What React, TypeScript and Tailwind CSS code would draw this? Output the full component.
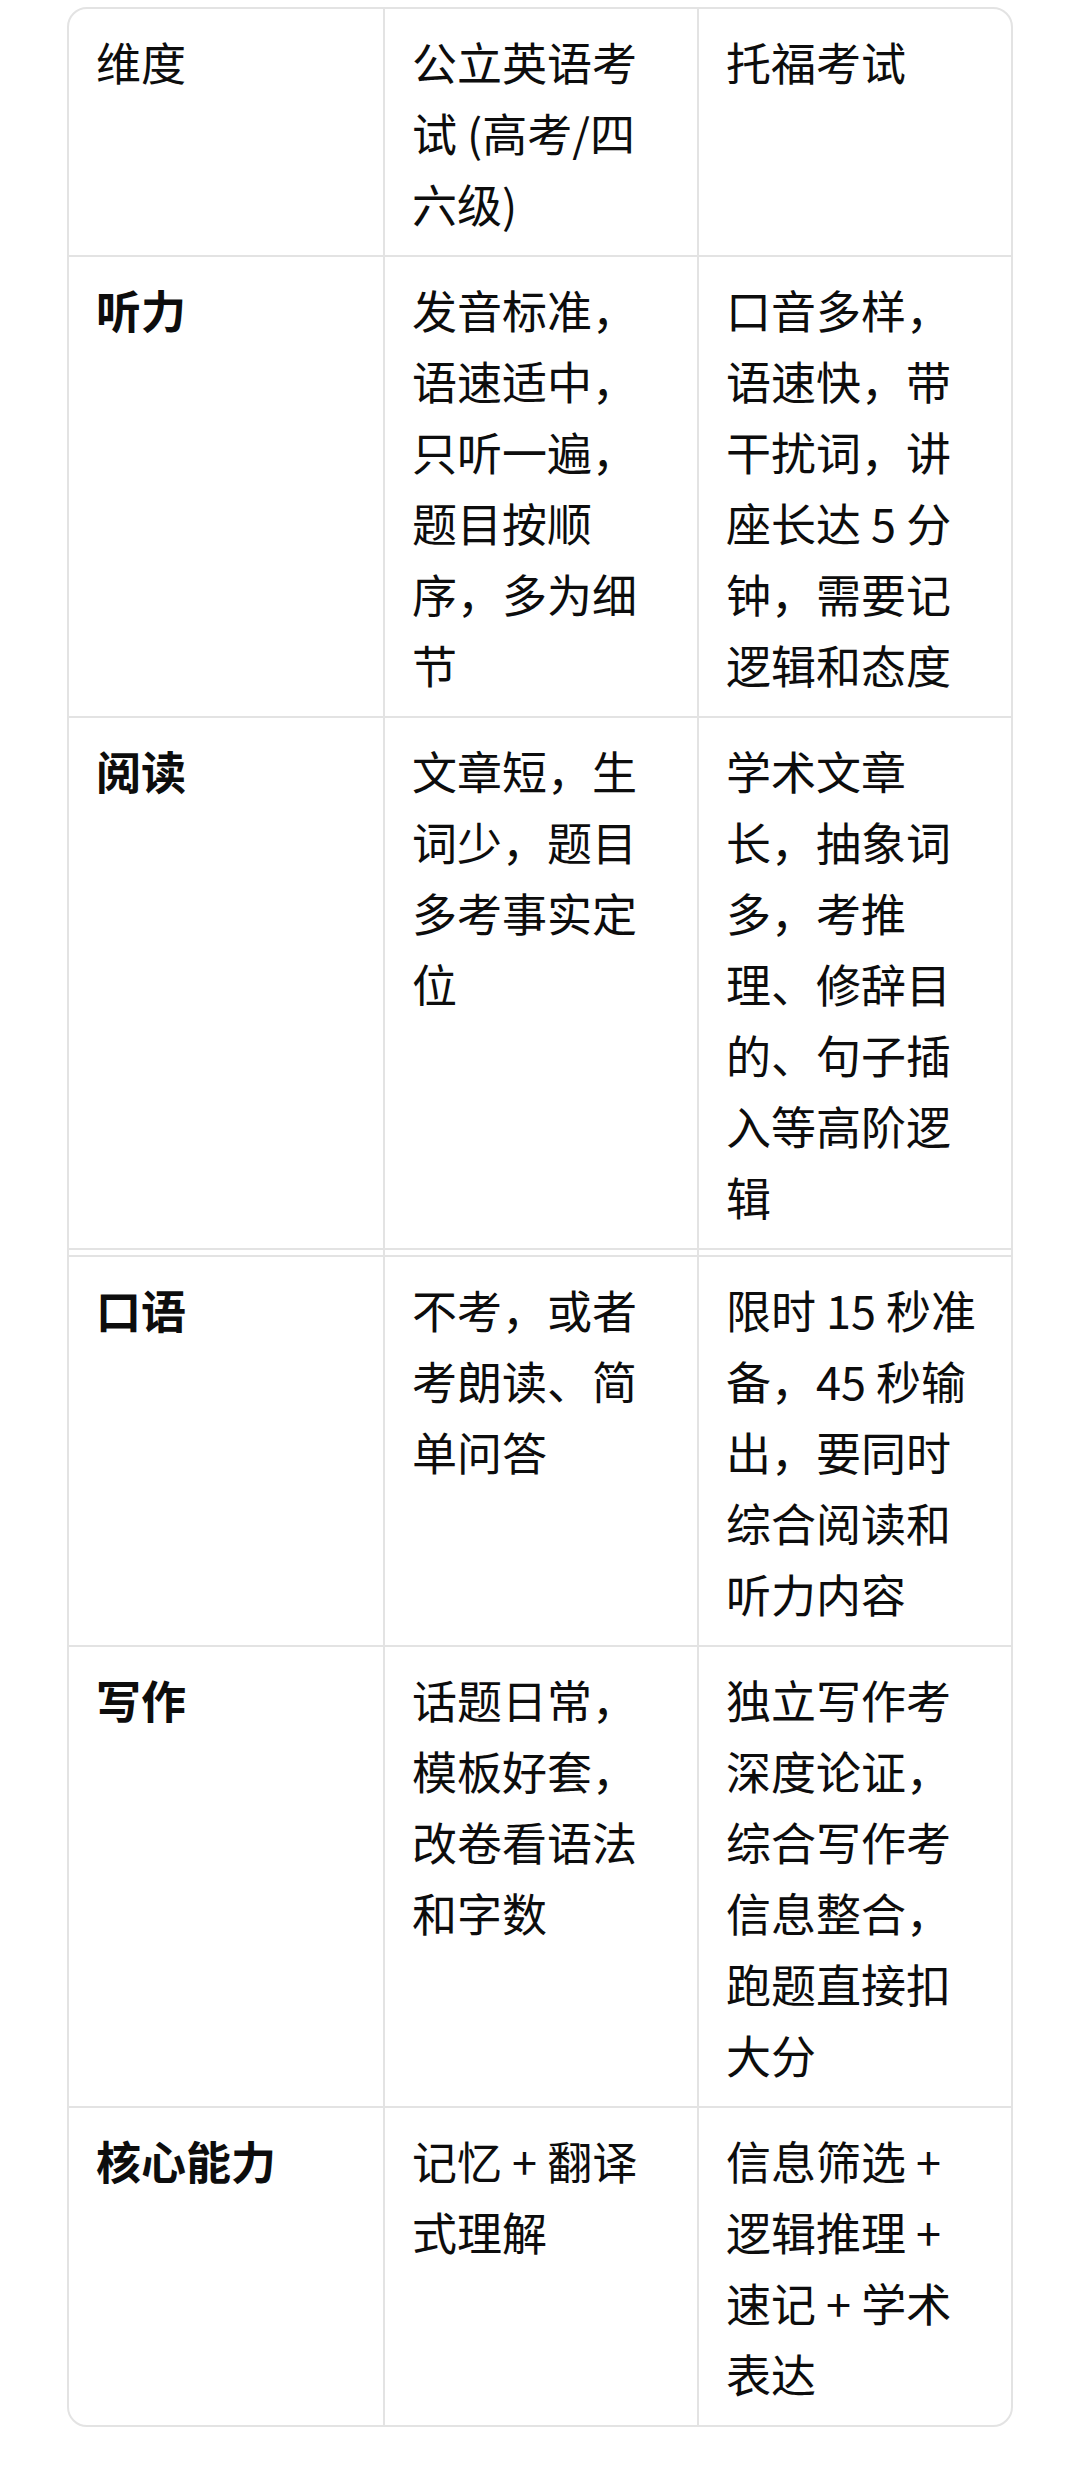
import type { ReactNode } from "react";

type Row = {
  label: ReactNode;
  gk: ReactNode;
  toefl: ReactNode;
};

const header: Row = {
  label: "维度",
  gk: "公立英语考试 (高考/四六级)",
  toefl: "托福考试",
};

const partOne: Row[] = [
  {
    label: "听力",
    gk: "发音标准，语速适中，只听一遍，题目按顺序，多为细节",
    toefl: "口音多样，语速快，带干扰词，讲座长达 5 分钟，需要记逻辑和态度",
  },
  {
    label: "阅读",
    gk: "文章短，生词少，题目多考事实定位",
    toefl: "学术文章长，抽象词多，考推理、修辞目的、句子插入等高阶逻辑",
  },
];

const partTwo: Row[] = [
  {
    label: "口语",
    gk: "不考，或者考朗读、简单问答",
    toefl: "限时 15 秒准备，45 秒输出，要同时综合阅读和听力内容",
  },
  {
    label: "写作",
    gk: "话题日常，模板好套，改卷看语法和字数",
    toefl: "独立写作考深度论证，综合写作考信息整合，跑题直接扣大分",
  },
  {
    label: "核心能力",
    gk: "记忆 + 翻译式理解",
    toefl: "信息筛选 + 逻辑推理 + 速记 + 学术表达",
  },
];

const cell = "px-[27px] pt-[17px] pb-[16px]";

function TableRow({ row, head, first }: { row: Row; head?: boolean; first?: boolean }) {
  return (
    <div className={`grid grid-cols-3 ${first ? "" : "border-t-2 border-[#e3e3e3]"}`}>
      <div className={`${cell} ${head ? "font-normal" : "font-bold"}`}>{row.label}</div>
      <div className={`${cell} border-l-2 border-[#e3e3e3]`}>{row.gk}</div>
      <div className={`${cell} border-l-2 border-[#e3e3e3]`}>{row.toefl}</div>
    </div>
  );
}

export default function App() {
  return (
    <div
      className="min-h-screen bg-white pt-[7px] pb-[40px] text-[#0d0d0d]"
      style={{ fontFamily: '"Noto Sans CJK SC", "Noto Sans", sans-serif' }}
    >
      <div className="mx-auto w-[946px] overflow-hidden rounded-[20px] border-2 border-[#e3e3e3] bg-white text-[45px] leading-[71px]">
        <TableRow row={header} head first />
        {partOne.map((r) => (
          <TableRow key={String(r.label)} row={r} />
        ))}

        {/* seam between two screenshots: doubled rule */}
        <div className="grid h-[7px] grid-cols-3 border-t-2 border-[#e3e3e3]">
          <div />
          <div className="border-l-2 border-[#e3e3e3]" />
          <div className="border-l-2 border-[#e3e3e3]" />
        </div>

        {partTwo.map((r) => (
          <TableRow key={String(r.label)} row={r} />
        ))}
      </div>
    </div>
  );
}
